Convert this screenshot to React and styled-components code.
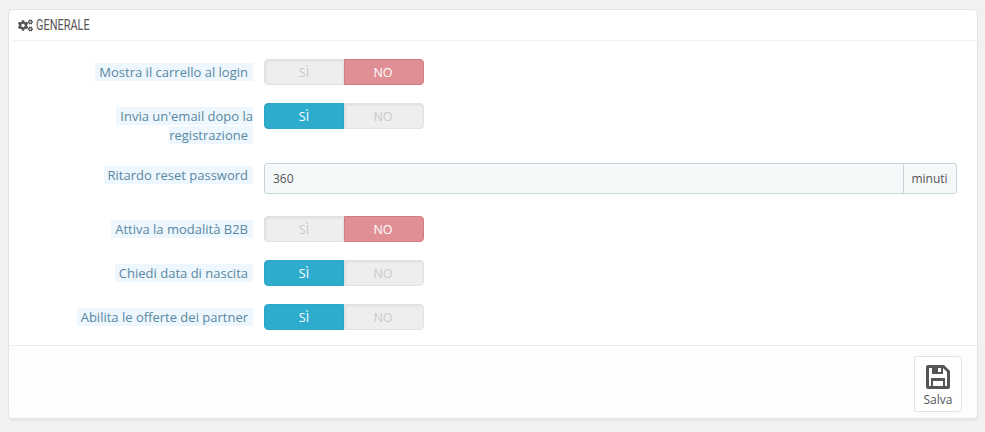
import React from 'react';
import styled, { createGlobalStyle } from 'styled-components';
import { FaCogs } from 'react-icons/fa';

const GlobalStyle = createGlobalStyle`
    html, body {
        margin: 0;
        height: 432px;
        overflow: hidden;
        background: #eff1f2;
        font-family: "Open Sans", "Liberation Sans", sans-serif;
    }
`

const Page = styled.div`
    padding: 9px 7px 0 8px;
`

const Panel = styled.div`
    height: 410px;
    box-sizing: border-box;
    background: #fff;
    border: 1px solid #e1e3e5;
    border-radius: 5px;
    box-shadow: 0 2px 0 rgba(0, 0, 0, 0.04);
    display: flex;
    flex-direction: column;
    overflow: hidden;
`

const PanelHeading = styled.div`
    flex: none;
    height: 30px;
    margin-left: 4px;
    padding-left: 5px;
    border-bottom: 1px solid #eef0f1;
    display: flex;
    align-items: center;
    gap: 3px;
    color: #555;
    font-family: Roboto, "Liberation Sans", sans-serif;
    font-size: 15px;
    text-transform: uppercase;
`

const HeadingText = styled.span`
    display: inline-block;
    transform: scaleX(0.73);
    transform-origin: left center;
`

const Form = styled.div`
    flex: 1;
    min-height: 0;
    padding-top: 18px;
`

const Row = styled.div`
    display: grid;
    grid-template-columns: 190px 1fr;
    column-gap: 11px;
    padding-left: 54px;
    padding-right: 20px;
    margin-bottom: ${props => props.$gap || '18px'};
`

const LabelCell = styled.div`
    padding-top: ${props => props.$top || '4px'};
    text-align: right;
    font-size: 13px;
    line-height: 19px;
    color: #5a87a3;
`

const LabelText = styled.span`
    padding: 0 5px 0 4px;
    background: #edf7fd;
`

const Switch = styled.div`
    display: flex;
    width: 160px;
    height: 26px;
`

const SwitchSide = styled.div`
    width: 80px;
    box-sizing: border-box;
    display: flex;
    align-items: center;
    justify-content: center;
    padding-right: ${props => props.$left ? '0' : '2px'};
    font-size: 12.5px;
    font-weight: 400;
    border: 1px solid ${props => props.$border};
    background: ${props => props.$bg};
    color: ${props => props.$color};
    box-shadow: ${props => props.$sunken ? 'inset 1px 1px 2px rgba(0, 0, 0, 0.08)' : 'none'};
    border-radius: ${props => props.$left ? '4px 0 0 4px' : '0 4px 4px 0'};
`

const InputGroup = styled.div`
    display: flex;
    height: 31px;
    box-sizing: border-box;
    border: 1px solid #c7d6db;
    border-radius: 3px;
    background: #f5f8f9;
    font-size: 12px;
    color: #555;
`

const InputValue = styled.div`
    flex: 1;
    display: flex;
    align-items: center;
    padding: 0 0 1px 8px;
`

const InputAddon = styled.div`
    width: 53px;
    box-sizing: border-box;
    border-left: 1px solid #c7d6db;
    display: flex;
    align-items: center;
    justify-content: center;
    padding: 0 1px 1px 0;
`

const PanelFooter = styled.div`
    flex: none;
    height: 73px;
    box-sizing: border-box;
    border-top: 1px solid #e9ebec;
    background: #fcfdfe;
    display: flex;
    justify-content: flex-end;
    padding: 10px 15px 0 0;
`

const SaveButton = styled.div`
    width: 48px;
    height: 56px;
    box-sizing: border-box;
    background: #fff;
    border: 1px solid #e2e4e6;
    border-radius: 3px;
    display: flex;
    flex-direction: column;
    align-items: center;
    padding-top: 8px;
    color: #555;
    font-size: 12px;
    line-height: 21px;
`

const FloppyIcon = () => (
    <svg width="24" height="24" viewBox="0 0 24 24" fill="#555">
        <path
            fillRule="evenodd"
            d="M2 0H18L24 6V22A2 2 0 0 1 22 24H2A2 2 0 0 1 0 22V2A2 2 0 0 1 2 0ZM3 3V21H5V13H19V21H21V7L17 3V9H6V3ZM7 16V21H17V16ZM12 3V7H15V3Z"
        />
    </svg>
);

const OFF = { $bg: '#eeeeee', $border: '#e2e2e2', $color: '#c9c9c9', $sunken: true };

const Toggle = ({ on }) => (
    <Switch>
        {on ? (
            <SwitchSide $left $bg={'#2eacce'} $border={'#2ca6c7'} $color={'#fff'}>SÌ</SwitchSide>
        ) : (
            <SwitchSide $left {...OFF}>SÌ</SwitchSide>
        )}
        {on ? (
            <SwitchSide {...OFF}>NO</SwitchSide>
        ) : (
            <SwitchSide $bg={'#e08f95'} $border={'#cf7c82'} $color={'#fff'}>NO</SwitchSide>
        )}
    </Switch>
);

const App = () => (
    <Page>
        <GlobalStyle />
        <Panel>
            <PanelHeading>
                <FaCogs size={15} />
                <HeadingText>Generale</HeadingText>
            </PanelHeading>
            <Form>
                <Row>
                    <LabelCell><LabelText>Mostra il carrello al login</LabelText></LabelCell>
                    <Toggle on={false} />
                </Row>
                <Row>
                    <LabelCell><LabelText>Invia un'email dopo la registrazione</LabelText></LabelCell>
                    <Toggle on={true} />
                </Row>
                <Row $gap={'22px'}>
                    <LabelCell $top={'3px'}><LabelText>Ritardo reset password</LabelText></LabelCell>
                    <InputGroup>
                        <InputValue>360</InputValue>
                        <InputAddon>minuti</InputAddon>
                    </InputGroup>
                </Row>
                <Row>
                    <LabelCell><LabelText>Attiva la modalità B2B</LabelText></LabelCell>
                    <Toggle on={false} />
                </Row>
                <Row>
                    <LabelCell><LabelText>Chiedi data di nascita</LabelText></LabelCell>
                    <Toggle on={true} />
                </Row>
                <Row>
                    <LabelCell><LabelText>Abilita le offerte dei partner</LabelText></LabelCell>
                    <Toggle on={true} />
                </Row>
            </Form>
            <PanelFooter>
                <SaveButton>
                    <FloppyIcon />
                    <span>Salva</span>
                </SaveButton>
            </PanelFooter>
        </Panel>
    </Page>
);

export default App;
